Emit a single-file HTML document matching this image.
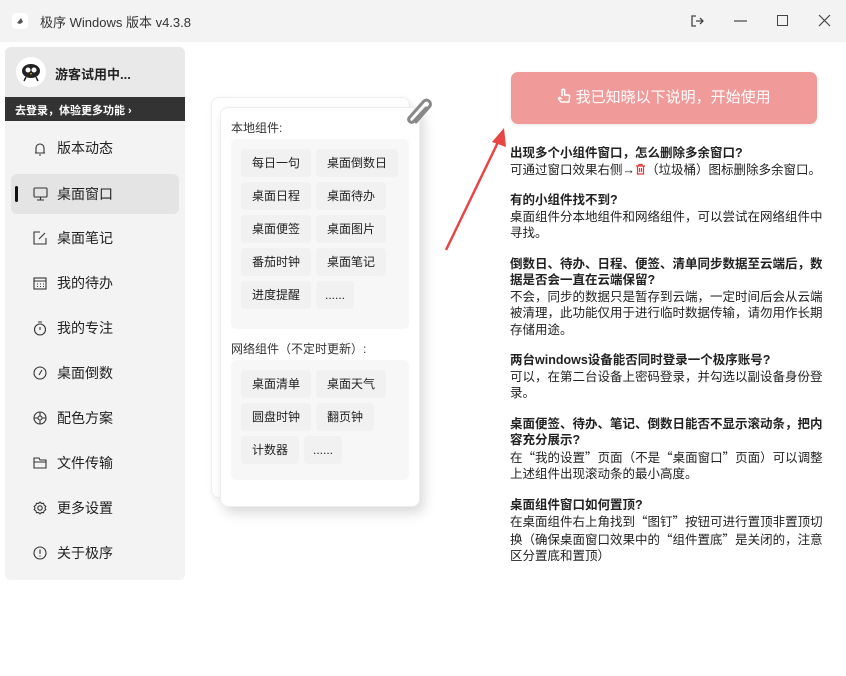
<!DOCTYPE html>
<html><head><meta charset="utf-8"><style>
*{margin:0;padding:0;box-sizing:border-box}
body{width:846px;height:676px;background:#fff;font-family:"Liberation Sans","Noto Sans CJK SC",sans-serif;color:#222;position:relative;overflow:hidden}
.tb{position:absolute;left:0;top:0;width:846px;height:42px;background:#f3f3f3}
.tb .t{position:absolute;left:40px;top:12px;font-size:13px;color:#333}
.side{position:absolute;left:5px;top:47px;width:180px;height:533px;background:#f3f3f3;border-radius:6px;overflow:hidden}
.hd{height:50px;background:#e9e9e9;position:relative}
.hd .n{position:absolute;left:50px;top:17px;font-size:13px;font-weight:bold;color:#222}
.dk{height:24px;background:#333;color:#fff;font-size:11px;font-weight:bold;padding:5px 0 0 10px}
.nav{position:absolute;left:0;font-size:14px;color:#222;width:180px;height:40px}
.nav span{position:absolute;left:52px;top:10px}
.nav svg{position:absolute;left:28px;top:13px}
.act{background:#e4e4e4;left:6px;width:168px;border-radius:6px}
.act span{left:46px}.act svg{left:22px}
.act:before{content:"";position:absolute;left:4px;top:12px;width:3px;height:16px;background:#111;border-radius:2px}
.card{position:absolute;background:#fff;border-radius:8px;border:1px solid #eee}
.lbl{position:absolute;font-size:12px;color:#333}
.pan{position:absolute;left:231px;width:178px;background:#f7f7f7;border-radius:5px}
.chip{position:absolute;height:28px;background:#f1f1f1;border-radius:4px;font-size:12px;color:#222;text-align:center;line-height:28px}
.btn{position:absolute;left:511px;top:72px;width:306px;height:52px;background:#f19a9a;border-radius:7px;color:#fff;font-size:15px;text-align:center;line-height:52px;box-shadow:0 1px 3px rgba(0,0,0,.1)}
.txt{position:absolute;left:510px;top:145px;width:336px;font-size:12.5px;line-height:16.5px;color:#222;white-space:nowrap}
.txt b{display:block}
.txt p{margin-bottom:14px}
.q{font-family:"Noto Sans CJK SC",sans-serif}
</style></head><body>
<div class="tb">
<svg style="position:absolute;left:12px;top:13px" width="16" height="16"><rect width="16" height="16" rx="4" fill="#fff"/><path d="M5 10 L9 5 L11 9 L8 11Z" fill="#555"/></svg>
<div class="t">极序 Windows 版本 v4.3.8</div>
<svg style="position:absolute;left:690px;top:14px" width="14" height="14" fill="none" stroke="#444" stroke-width="1.3"><path d="M6 2H2v10h4M6 7h7M10 4l3 3-3 3"/></svg>
<svg style="position:absolute;left:734px;top:20px" width="14" height="2"><path d="M0 1h13" stroke="#444" stroke-width="1.2"/></svg>
<svg style="position:absolute;left:777px;top:15px" width="12" height="12"><rect x=".5" y=".5" width="10" height="10" fill="none" stroke="#444"/></svg>
<svg style="position:absolute;left:818px;top:14px" width="13" height="13"><path d="M1 1l11 11M12 1L1 12" stroke="#444" stroke-width="1.2"/></svg>
</div>
<div class="side">
<div class="hd"><svg style="position:absolute;left:11px;top:10px" width="30" height="30"><circle cx="15" cy="15" r="15" fill="#fff"/><ellipse cx="15" cy="14" rx="9" ry="7" fill="#222"/><circle cx="12" cy="13" r="2.5" fill="#fff"/><circle cx="18" cy="13" r="2.5" fill="#fff"/><path d="M14 16l1 2 1-2z" fill="#e8b400"/><path d="M10 20l-2 4M20 20l2 4" stroke="#222" stroke-width="1.5"/></svg><div class="n">游客试用中...</div></div>
<div class="dk">去登录，体验更多功能 ›</div>
</div>
<div class="nav" style="left:5px;top:128px"><svg width="14" height="16" fill="none" stroke="#333" stroke-width="1.1"><path d="M2 12h10M3 12V7a4 4 0 018 0v5M6 14h2"/></svg><span>版本动态</span></div>
<div class="nav act" style="left:11px;top:174px"><svg width="15" height="14" fill="none" stroke="#333" stroke-width="1.1"><rect x="1" y="1" width="13" height="9" rx="1"/><path d="M7.5 10v3M4 13h7"/></svg><span>桌面窗口</span></div>
<div class="nav" style="left:5px;top:218px"><svg width="14" height="14" fill="none" stroke="#333" stroke-width="1.1"><path d="M7 1H1v12h12V7M6 8l6-6"/></svg><span>桌面笔记</span></div>
<div class="nav" style="left:5px;top:263px"><svg width="14" height="14" fill="none" stroke="#333" stroke-width="1.1"><rect x="1" y="2" width="12" height="11"/><path d="M1 5h12M4 8h1M7 8h1M10 8h1M4 10.5h1M7 10.5h1M10 10.5h1"/></svg><span>我的待办</span></div>
<div class="nav" style="left:5px;top:308px"><svg width="14" height="15" fill="none" stroke="#333" stroke-width="1.1"><circle cx="7" cy="8.5" r="5.5"/><path d="M5 1h4M7 6v3"/></svg><span>我的专注</span></div>
<div class="nav" style="left:5px;top:353px"><svg width="14" height="14" fill="none" stroke="#333" stroke-width="1.1"><circle cx="7" cy="7" r="6"/><path d="M9 4L6 9"/></svg><span>桌面倒数</span></div>
<div class="nav" style="left:5px;top:398px"><svg width="14" height="14" fill="none" stroke="#333" stroke-width="1.1"><circle cx="7" cy="7" r="6"/><circle cx="7" cy="7" r="2"/><path d="M7 1v4M7 9v4M1 7h4M9 7h4"/></svg><span>配色方案</span></div>
<div class="nav" style="left:5px;top:443px"><svg width="15" height="14" fill="none" stroke="#333" stroke-width="1.1"><path d="M1 2h5l1 2h6v8H1zM1 6h12"/></svg><span>文件传输</span></div>
<div class="nav" style="left:5px;top:488px"><svg width="14" height="14" fill="none" stroke="#333" stroke-width="1.1"><circle cx="7" cy="7" r="2.2"/><path d="M7 1l1.5 1.5 2-.3.6 2 1.7 1.1-.8 1.7.8 1.7-1.7 1.1-.6 2-2-.3L7 13l-1.5-1.5-2 .3-.6-2L1.2 8.7 2 7l-.8-1.7 1.7-1.1.6-2 2 .3z"/></svg><span>更多设置</span></div>
<div class="nav" style="left:5px;top:533px"><svg width="14" height="14" fill="none" stroke="#333" stroke-width="1.1"><circle cx="7" cy="7" r="6"/><path d="M7 3.5v4.5M7 9.5v1"/></svg><span>关于极序</span></div>

<div class="card" style="left:211px;top:97px;width:199px;height:401px;box-shadow:2px 3px 8px rgba(0,0,0,.08)"></div>
<div class="card" style="left:220px;top:107px;width:200px;height:400px;box-shadow:4px 6px 12px rgba(0,0,0,.15)"></div>
<svg style="position:absolute;left:402px;top:96px" width="36" height="36" fill="none" stroke="#888" stroke-width="3" stroke-linecap="round"><path d="M14 26L28 10a4 4 0 00-6-5L7 22a3 3 0 004 4L24 12"/></svg>
<div class="lbl" style="left:231px;top:119px">本地组件:</div>
<div class="pan" style="top:139px;height:190px"></div>
<div class="chip" style="left:241px;top:149px;width:70px">每日一句</div><div class="chip" style="left:316px;top:149px;width:82px">桌面倒数日</div>
<div class="chip" style="left:241px;top:182px;width:70px">桌面日程</div><div class="chip" style="left:316px;top:182px;width:70px">桌面待办</div>
<div class="chip" style="left:241px;top:215px;width:70px">桌面便签</div><div class="chip" style="left:316px;top:215px;width:70px">桌面图片</div>
<div class="chip" style="left:241px;top:248px;width:70px">番茄时钟</div><div class="chip" style="left:316px;top:248px;width:70px">桌面笔记</div>
<div class="chip" style="left:241px;top:281px;width:70px">进度提醒</div><div class="chip" style="left:316px;top:281px;width:38px">......</div>
<div class="lbl" style="left:231px;top:340px">网络组件（不定时更新）:</div>
<div class="pan" style="top:360px;height:120px"></div>
<div class="chip" style="left:241px;top:370px;width:70px">桌面清单</div><div class="chip" style="left:316px;top:370px;width:70px">桌面天气</div>
<div class="chip" style="left:241px;top:403px;width:70px">圆盘时钟</div><div class="chip" style="left:316px;top:403px;width:58px">翻页钟</div>
<div class="chip" style="left:241px;top:436px;width:58px">计数器</div><div class="chip" style="left:304px;top:436px;width:38px">......</div>

<svg style="position:absolute;left:440px;top:122px" width="75" height="135"><path d="M6 128L60 16" stroke="#e84545" stroke-width="2.5"/><path d="M64 6L52 20l14 5z" fill="#e84545"/></svg>
<div class="btn"><svg width="14" height="16" style="vertical-align:-2px" fill="none" stroke="#fff" stroke-width="1.5"><path d="M5 8V2.5a1.3 1.3 0 012.6 0V7h3.5a1.5 1.5 0 011.5 1.7L12 14H4L1.5 10.5l1-1L5 11"/></svg> 我已知晓以下说明，开始使用</div>
<div class="txt">
<p><b>出现多个小组件窗口，怎么删除多余窗口?</b>可通过窗口效果右侧→<svg width="11" height="12" style="vertical-align:-1px" fill="none" stroke="#e33" stroke-width="1.2"><path d="M1 3h9M4 3V1.5h3V3M2.5 3v8h6V3M4.5 5v4M6.5 5v4"/></svg>（垃圾桶）图标删除多余窗口。</p>
<p><b>有的小组件找不到?</b>桌面组件分本地组件和网络组件，可以尝试在网络组件中<br>寻找。</p>
<p><b>倒数日、待办、日程、便签、清单同步数据至云端后，数<br>据是否会一直在云端保留?</b>不会，同步的数据只是暂存到云端，一定时间后会从云端<br>被清理，此功能仅用于进行临时数据传输，请勿用作长期<br>存储用途。</p>
<p><b>两台windows设备能否同时登录一个极序账号?</b>可以，在第二台设备上密码登录，并勾选以副设备身份登<br>录。</p>
<p><b>桌面便签、待办、笔记、倒数日能否不显示滚动条，把内<br>容充分展示?</b>在<span class="q">“</span>我的设置<span class="q">”</span>页面（不是<span class="q">“</span>桌面窗口<span class="q">”</span>页面）可以调整<br>上述组件出现滚动条的最小高度。</p>
<p><b>桌面组件窗口如何置顶?</b>在桌面组件右上角找到<span class="q">“</span>图钉<span class="q">”</span>按钮可进行置顶非置顶切<br>换（确保桌面窗口效果中的<span class="q">“</span>组件置底<span class="q">”</span>是关闭的，注意<br>区分置底和置顶）</p>
</div>
</body></html>
